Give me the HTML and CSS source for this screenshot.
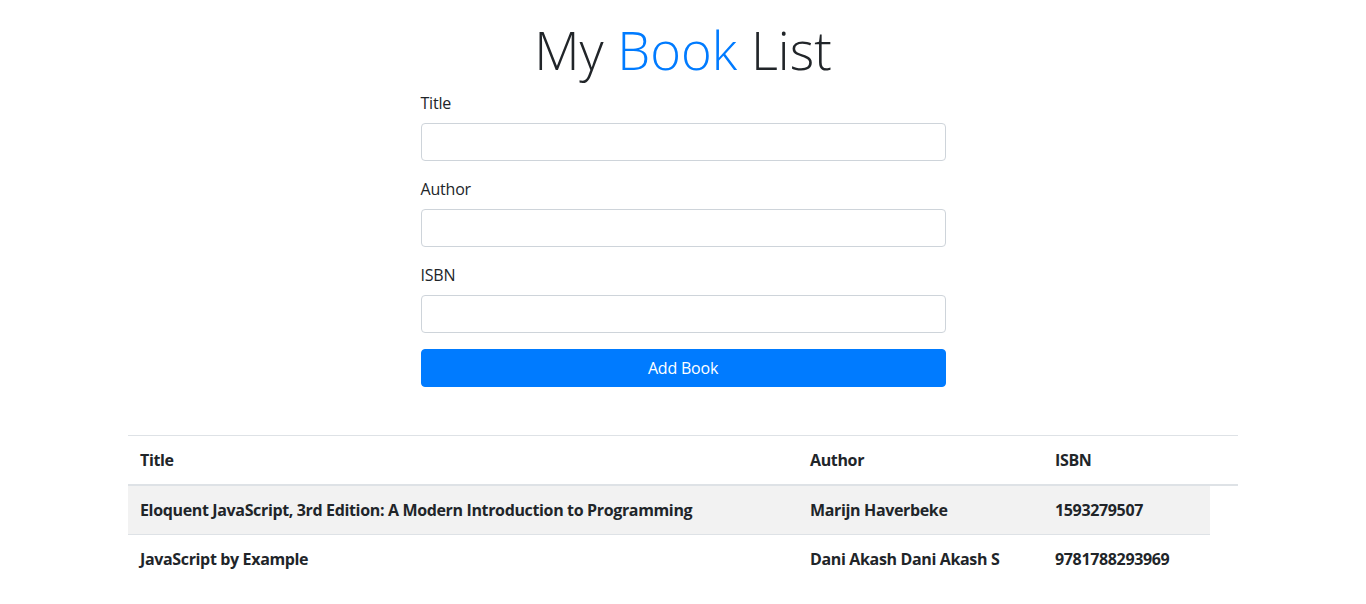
FILE: index.html
```html
<!DOCTYPE html>
<html lang="en">
<head>
<meta charset="utf-8">
<title>My Book List</title>
<link rel="stylesheet" href="styles.css">
</head>
<body>
<div class="container">
  <h1 class="heading">My <span class="accent">Book</span> List</h1>
  <form class="book-form">
    <div class="form-group">
      <label class="form-label" for="title">Title</label>
      <input class="form-control" id="title" type="text">
    </div>
    <div class="form-group">
      <label class="form-label" for="author">Author</label>
      <input class="form-control" id="author" type="text">
    </div>
    <div class="form-group">
      <label class="form-label" for="isbn">ISBN</label>
      <input class="form-control" id="isbn" type="text">
    </div>
    <button class="btn-primary" type="button">Add Book</button>
  </form>
  <table class="book-table">
    <thead>
      <tr>
        <th class="col-title">Title</th>
        <th class="col-author">Author</th>
        <th class="col-isbn">ISBN</th>
        <th class="col-action"></th>
      </tr>
    </thead>
    <tbody>
      <tr>
        <td>Eloquent JavaScript, 3rd Edition: A Modern Introduction to Programming</td>
        <td>Marijn Haverbeke</td>
        <td>1593279507</td>
      </tr>
      <tr>
        <td>JavaScript by Example</td>
        <td>Dani Akash Dani Akash S</td>
        <td>9781788293969</td>
      </tr>
    </tbody>
  </table>
</div>
</body>
</html>
```

FILE: styles.css
```css
*, *::before, *::after { box-sizing: border-box; }

html, body {
  margin: 0;
  padding: 0;
}

body {
  font-family: "Open Sans", "Noto Sans", "Liberation Sans", sans-serif;
  font-size: 16px;
  line-height: 1.5;
  color: #212529;
  background: #fff;
}

.container {
  max-width: 1140px;
  margin: 0 auto;
  padding: 16px 15px 0;
}

.heading {
  margin: 0 0 8px;
  text-align: center;
  font-size: 52.5px;
  font-weight: 300;
  line-height: 67.2px;
  color: #212529;
}

.accent { color: #007bff; }

.book-form {
  width: 525px;
  margin: 0 auto 48px;
  letter-spacing: -0.2px;
}

.form-group { margin-bottom: 16px; }

.form-label {
  display: block;
  margin-bottom: 8px;
  line-height: 24px;
}

.form-control {
  display: block;
  width: 100%;
  height: 38px;
  padding: 6px 12px;
  font: inherit;
  color: #495057;
  background: #fff;
  border: 1px solid #ced4da;
  border-radius: 4px;
}

.btn-primary {
  display: block;
  width: 100%;
  height: 38px;
  padding: 6px 12px;
  font: inherit;
  letter-spacing: inherit;
  color: #fff;
  background: #007bff;
  border: 1px solid #007bff;
  border-radius: 4px;
}

.book-table {
  width: 100%;
  border-collapse: collapse;
  color: #212529;
  letter-spacing: -0.35px;
}

.book-table th,
.book-table td {
  padding: 12px;
  text-align: left;
  vertical-align: top;
  font-weight: 700;
  border-top: 1px solid #dee2e6;
}

.book-table thead th {
  border-bottom: 2px solid #dee2e6;
}

.book-table tbody tr:nth-of-type(odd) {
  background: rgba(0, 0, 0, 0.05);
}

.col-title { width: 670px; }
.col-author { width: 245px; }
.col-isbn { width: 167px; }
.col-action { width: 28px; }
```
